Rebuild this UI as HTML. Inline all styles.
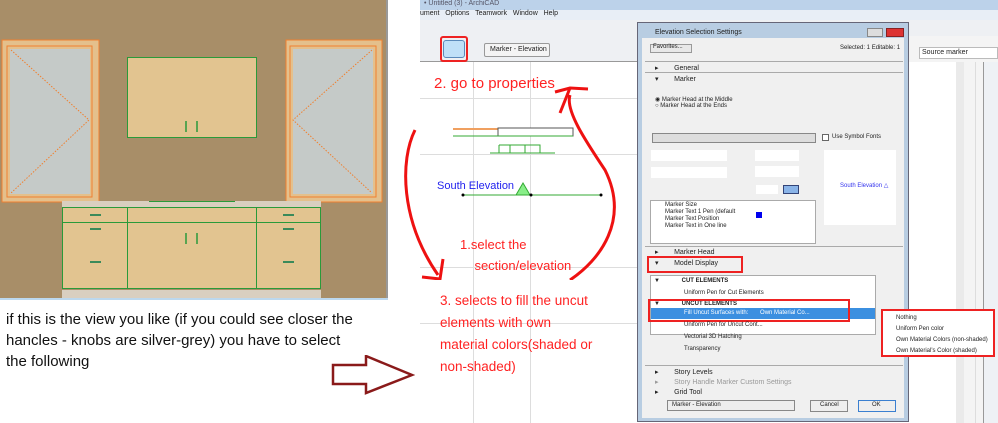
<!DOCTYPE html>
<html><head><meta charset="utf-8"><style>
*{margin:0;padding:0;box-sizing:border-box}
body{width:998px;height:423px;overflow:hidden;background:#fff;position:relative;font-family:"Liberation Sans",sans-serif}
.a{position:absolute}
.s{font-size:7px;color:#222;white-space:nowrap}
.red{color:#f22;font-family:"Liberation Sans",sans-serif}
</style></head><body>
<div class="a" style="left:0;top:0;width:386px;height:298px;background:#a88e68"></div>
<div class="a" style="left:386px;top:0;width:2px;height:298px;background:#999"></div>
<div class="a" style="left:0;top:298px;width:388px;height:2px;background:#bcd8ee"></div>
<svg class="a" style="left:0;top:0" width="386" height="298">
<g>
<rect x="2" y="40" width="97" height="162" fill="#e4c08c" stroke="#f08030" stroke-width="1"/>
<rect x="7" y="46" width="85" height="151" fill="none" stroke="#f08030"/>
<rect x="10" y="49" width="80" height="145" fill="#c5cac8"/>
<path d="M11 50 L89 120 L11 193" stroke="#f08030" stroke-dasharray="1.5 1.5" fill="none"/>
<rect x="286" y="40" width="96" height="162" fill="#e4c08c" stroke="#f08030"/>
<rect x="290" y="46" width="86" height="151" fill="none" stroke="#f08030"/>
<rect x="293" y="49" width="80" height="145" fill="#c5cac8"/>
<path d="M372 50 L293 120 L372 193" stroke="#f08030" stroke-dasharray="1.5 1.5" fill="none"/>
</g>
<rect x="127.5" y="57.5" width="129" height="80" fill="#e2c490" stroke="#2a9a3a"/>
<path d="M186 121v11M197 121v11" stroke="#2a9a3a" stroke-width="1.5"/>
<rect x="62" y="201" width="259" height="7" fill="#d9cfc0"/>
<path d="M149 201.5h86" stroke="#2a9a3a"/>
<rect x="62.5" y="207.5" width="258" height="81" fill="#e2c490" stroke="#2a9a3a"/>
<path d="M127.5 207v81M256.5 207v81M62 222.5h259" stroke="#2a9a3a"/>
<path d="M90 215h11M90 229h11M90 262h11M283 215h11M283 229h11M283 262h11" stroke="#3a8a5a" stroke-width="2"/>
<path d="M186 233v11M197 233v11" stroke="#2a9a3a" stroke-width="1.5"/>
<rect x="62" y="290" width="259" height="8" fill="#d9cfc0"/>
</svg>
<div class="a" style="left:6px;top:309px;white-space:nowrap;font-size:15px;line-height:21px;color:#111;font-family:'Liberation Sans',sans-serif">if this is the view you like (if you could see closer the<br>hancles - knobs are silver-grey) you have to select<br>the following</div>
<svg class="a" style="left:330px;top:355px" width="85" height="45"><path d="M3 10h33V1l46 19-46 18v-9H3z" fill="none" stroke="#8a1a1a" stroke-width="2.5"/></svg>

<div class="a" style="left:420px;top:0;width:578px;height:10px;background:#bcd2ea"></div>
<div class="a s" style="left:424px;top:0;color:#556">• Untitled (3) - ArchiCAD</div>
<div class="a" style="left:420px;top:10px;width:578px;height:10px;background:#e8eef6"></div>
<div class="a s" style="left:420px;top:10px">ument&nbsp;&nbsp; Options&nbsp;&nbsp; Teamwork&nbsp;&nbsp; Window&nbsp;&nbsp; Help</div>
<div class="a" style="left:420px;top:20px;width:578px;height:42px;background:#eef0f3;border-bottom:1px solid #999"></div>
<div class="a" style="left:440px;top:36px;width:28px;height:26px;border:2px solid #e22;border-radius:3px"></div>
<div class="a" style="left:443px;top:40px;width:22px;height:18px;background:#bfe0f8;border:1px solid #5a8abb;border-radius:3px"></div>
<div class="a" style="left:484px;top:43px;width:66px;height:14px;border:1px solid #999;border-radius:2px;background:#f4f4f4"></div>
<div class="a s" style="left:490px;top:46px">Marker - Elevation</div>
<div class="a" style="left:473px;top:62px;width:1px;height:361px;background:#ddd"></div>
<div class="a" style="left:530px;top:62px;width:1px;height:361px;background:#ddd"></div>
<div class="a" style="left:420px;top:98px;width:218px;height:1px;background:#ddd"></div>
<div class="a" style="left:420px;top:154px;width:218px;height:1px;background:#ddd"></div>
<div class="a" style="left:420px;top:267px;width:218px;height:1px;background:#ddd"></div>
<div class="a" style="left:420px;top:323px;width:218px;height:1px;background:#ddd"></div>
<svg class="a" style="left:420px;top:60px" width="220" height="140">
<path d="M33 69h45M107 69h45" stroke="#f0a060" stroke-width="2"/>
<rect x="78" y="68" width="75" height="8" fill="#fff" stroke="#555"/>
<path d="M33 76h120" stroke="#3a3"/>
<path d="M70 93h65M79 85h41v8M79 85v8M90 85v8M105 85v8" stroke="#3a3" fill="none"/>
<path d="M110 135l-7-12-7 12z" fill="#8e8" stroke="#3a3"/>
<path d="M43 135h138" stroke="#3a3"/>
<circle cx="43" cy="135" r="1.5"/><circle cx="181" cy="135" r="1.5"/><circle cx="111" cy="135" r="1.5"/>
</svg>
<div class="a" style="left:437px;top:180px;font-size:11px;color:#2222ee">South Elevation</div>
<div class="a red" style="left:434px;top:75px;font-size:15px">2. go to properties</div>
<div class="a red" style="left:460px;top:234px;font-size:13px;line-height:21px">1.select the<br>&nbsp;&nbsp;&nbsp;&nbsp;section/elevation</div>
<div class="a red" style="left:440px;top:290px;font-size:13.5px;line-height:22px">3. selects to fill the uncut<br>elements with own<br>material colors(shaded or<br>non-shaded)</div>
<svg class="a" style="left:400px;top:80px" width="240" height="200" fill="none" stroke="#e11" stroke-width="3">
<path d="M15 50C0 80 0 140 38 195"/>
<path d="M22 197l18 2 3-20"/>
<path d="M170 200C200 180 230 140 205 90 185 60 165 30 170 15M155 12l15-4 18 1M170 8l-10 25"/>
</svg>
<div class="a" style="left:908px;top:36px;width:90px;height:387px;background:#f4f4f4"></div>
<div class="a" style="left:919px;top:47px;width:79px;height:12px;background:#fff;border:1px solid #bbb"></div>
<div class="a s" style="left:922px;top:49px">Source marker</div>
<div class="a" style="left:908px;top:62px;width:52px;height:361px;background:#fff"></div>
<div class="a" style="left:975px;top:62px;width:1px;height:361px;background:#ddd"></div>
<div class="a" style="left:983px;top:62px;width:15px;height:361px;background:#eef1f5;border-left:1px solid #999"></div>
<div class="a" style="left:956px;top:62px;width:8px;height:361px;background:#eaeaea"></div>
<div class="a" style="left:637px;top:22px;width:272px;height:400px;background:#b8cde2;border:1px solid #667"></div>
<div class="a s" style="left:655px;top:29px">Elevation Selection Settings</div>
<div class="a" style="left:867px;top:28px;width:16px;height:9px;background:#ddd;border:1px solid #888"></div>
<div class="a" style="left:886px;top:28px;width:18px;height:9px;background:#d33;border:1px solid #822"></div>
<div class="a" style="left:642px;top:38px;width:262px;height:380px;background:#f0f0f0"></div>
<div class="a" style="left:650px;top:44px;width:42px;height:9px;background:#e8e8e8;border:1px solid #999"></div>
<div class="a s" style="left:653px;top:44px;font-size:6px">Favorites...</div>
<div class="a s" style="left:840px;top:45px;font-size:6px">Selected: 1 Editable: 1</div>
<div class="a" style="left:645px;top:61px;width:258px;height:1px;background:#aaa"></div>
<div class="a s" style="left:655px;top:64px">▸ &nbsp;&nbsp;&nbsp;&nbsp;&nbsp;&nbsp;&nbsp;General</div>
<div class="a" style="left:645px;top:72px;width:258px;height:1px;background:#aaa"></div>
<div class="a s" style="left:655px;top:75px">▾ &nbsp;&nbsp;&nbsp;&nbsp;&nbsp;&nbsp;&nbsp;Marker</div>
<div class="a s" style="left:655px;top:96px;font-size:6px">◉ Marker Head at the Middle<br>○ Marker Head at the Ends</div>
<div class="a" style="left:652px;top:133px;width:164px;height:10px;background:#ddd;border:1px solid #888"></div>
<div class="a" style="left:822px;top:134px;width:7px;height:7px;border:1px solid #666;background:#fff"></div>
<div class="a s" style="left:832px;top:134px;font-size:6px">Use Symbol Fonts</div>
<div class="a" style="left:651px;top:150px;width:76px;height:11px;background:#fff"></div>
<div class="a" style="left:651px;top:167px;width:76px;height:11px;background:#fff"></div>
<div class="a" style="left:755px;top:150px;width:44px;height:11px;background:#fff"></div>
<div class="a" style="left:755px;top:166px;width:44px;height:11px;background:#fff"></div>
<div class="a" style="left:756px;top:185px;width:22px;height:9px;background:#fff"></div>
<div class="a" style="left:783px;top:185px;width:16px;height:9px;background:#8ab4e8;border:1px solid #347"></div>
<div class="a" style="left:824px;top:150px;width:72px;height:75px;background:#fff"></div>
<div class="a s" style="left:840px;top:182px;color:#33e;font-size:6px">South Elevation △</div>
<div class="a" style="left:650px;top:200px;width:166px;height:44px;background:#fff;border:1px solid #aaa"></div>
<div class="a s" style="left:665px;top:202px;font-size:6px;line-height:7px">Marker Size<br>Marker Text 1 Pen (default<br>Marker Text Position<br>Marker Text in One line</div>
<div class="a" style="left:756px;top:212px;width:6px;height:6px;background:#00e"></div>
<div class="a" style="left:645px;top:246px;width:258px;height:1px;background:#aaa"></div>
<div class="a s" style="left:655px;top:248px">▸ &nbsp;&nbsp;&nbsp;&nbsp;&nbsp;&nbsp;&nbsp;Marker Head</div>
<div class="a s" style="left:655px;top:259px">▾ &nbsp;&nbsp;&nbsp;&nbsp;&nbsp;&nbsp;&nbsp;Model Display</div>
<div class="a" style="left:647px;top:256px;width:96px;height:17px;border:2px solid #e22"></div>
<div class="a" style="left:650px;top:275px;width:226px;height:60px;background:#fff;border:1px solid #aaa"></div>
<div class="a s" style="left:654px;top:278px;font-weight:bold;font-size:6px">▼ &nbsp;&nbsp;&nbsp;&nbsp;&nbsp;&nbsp;&nbsp;&nbsp;&nbsp;&nbsp;&nbsp;&nbsp;CUT ELEMENTS</div>
<div class="a s" style="left:684px;top:290px;font-size:6px">Uniform Pen for Cut Elements</div>
<div class="a s" style="left:654px;top:301px;font-weight:bold;font-size:6px">▼ &nbsp;&nbsp;&nbsp;&nbsp;&nbsp;&nbsp;&nbsp;&nbsp;&nbsp;&nbsp;&nbsp;&nbsp;UNCUT ELEMENTS</div>
<div class="a" style="left:651px;top:308px;width:224px;height:11px;background:#3b8fe0"></div>
<div class="a s" style="left:684px;top:310px;color:#fff;font-size:6px">Fill Uncut Surfaces with: &nbsp;&nbsp;&nbsp;&nbsp;&nbsp;&nbsp;Own Material Co...</div>
<div class="a" style="left:648px;top:299px;width:202px;height:23px;border:2px solid #e22"></div>
<div class="a s" style="left:684px;top:322px;font-size:6px">Uniform Pen for Uncut Cont...<br><br>Vectorial 3D Hatching<br><br>Transparency</div>
<div class="a" style="left:645px;top:365px;width:258px;height:1px;background:#aaa"></div>
<div class="a s" style="left:655px;top:368px">▸ &nbsp;&nbsp;&nbsp;&nbsp;&nbsp;&nbsp;&nbsp;Story Levels</div>
<div class="a s" style="left:655px;top:378px;color:#999">▸ &nbsp;&nbsp;&nbsp;&nbsp;&nbsp;&nbsp;&nbsp;Story Handle Marker Custom Settings</div>
<div class="a s" style="left:655px;top:388px">▸ &nbsp;&nbsp;&nbsp;&nbsp;&nbsp;&nbsp;&nbsp;Grid Tool</div>
<div class="a" style="left:667px;top:400px;width:128px;height:11px;background:#eee;border:1px solid #888"></div>
<div class="a s" style="left:672px;top:402px;font-size:6px">Marker - Elevation</div>
<div class="a" style="left:810px;top:400px;width:38px;height:12px;background:#eee;border:1px solid #888"></div>
<div class="a s" style="left:820px;top:402px;font-size:6px">Cancel</div>
<div class="a" style="left:858px;top:400px;width:38px;height:12px;background:#eee;border:1px solid #3a7fd0"></div>
<div class="a s" style="left:872px;top:402px;font-size:6px">OK</div>
<div class="a" style="left:881px;top:309px;width:114px;height:48px;background:#fff;border:2px solid #e22"></div>
<div class="a s" style="left:896px;top:313px;font-size:6px;line-height:11px">Nothing<br>Uniform Pen color<br>Own Material Colors (non-shaded)<br>Own Material's Color (shaded)</div>
</body></html>
